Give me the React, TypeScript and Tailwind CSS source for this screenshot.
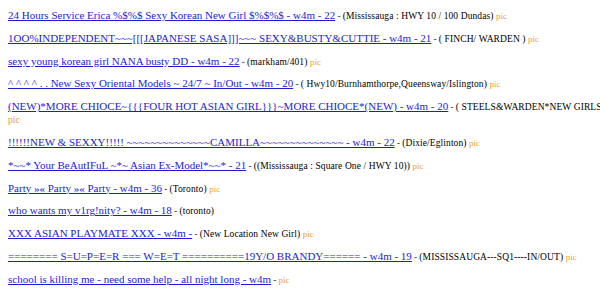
import React from 'react';

type Post = { title: string; loc?: string; pic?: boolean; picBelow?: boolean };

const posts: Post[] = [
  { title: '24 Hours Service Erica %$%$ Sexy Korean New Girl $%$%$ - w4m - 22', loc: '(Mississauga : HWY 10 / 100 Dundas)', pic: true },
  { title: '1OO%INDEPENDENT~~~[[[JAPANESE SASA]]]~~~ SEXY&BUSTY&CUTTIE - w4m - 21', loc: '( FINCH/ WARDEN )', pic: true },
  { title: 'sexy young korean girl NANA busty DD - w4m - 22', loc: '(markham/401)', pic: true },
  { title: '^ ^ ^ ^ . . New Sexy Oriental Models ~ 24/7 ~ In/Out - w4m - 20', loc: '( Hwy10/Burnhamthorpe,Queensway/Islington)', pic: true },
  { title: '(NEW)*MORE CHIOCE~{{{FOUR HOT ASIAN GIRL}}}~MORE CHIOCE*(NEW) - w4m - 20', loc: '( STEELS&WARDEN*NEW GIRLS)', pic: true, picBelow: true },
  { title: '!!!!!!NEW & SEXXY!!!!! ~~~~~~~~~~~~~~CAMILLA~~~~~~~~~~~~~~ - w4m - 22', loc: '(Dixie/Eglinton)', pic: true },
  { title: '*~~* Your BeAutIFuL ~*~ Asian Ex-Model*~~* - 21', loc: '((Mississauga : Square One / HWY 10))', pic: true },
  { title: 'Party »« Party »« Party - w4m - 36', loc: '(Toronto)', pic: true },
  { title: 'who wants my v1rg!nity? - w4m - 18', loc: '(toronto)' },
  { title: 'XXX ASIAN PLAYMATE XXX - w4m -', loc: '(New Location New Girl)', pic: true },
  { title: '======== S=U=P=E=R === W=E=T ==========19Y/O BRANDY====== - w4m - 19', loc: '(MISSISSAUGA---SQ1----IN/OUT)', pic: true },
  { title: 'school is killing me - need some help - all night long - w4m', pic: true },
];

export default function App() {
  return (
    <div className="w-[600px] h-[294px] overflow-hidden bg-white font-['Liberation_Serif',serif]">
      <div className="pl-2 pt-[9px] flex flex-col gap-[10.3px]">
        {posts.map((p, i) => (
          <div key={i} className="flex flex-col">
            <div className="text-[11px] leading-[12px] text-black whitespace-nowrap">
              <a href="#" className="text-[#1c1cd6] underline">{p.title}</a>
              <span className="text-[9px] leading-none"> - </span>
              {p.loc && <span className="text-[9.5px] leading-none tracking-[0.1px]">{p.loc} </span>}
              {p.pic && !p.picBelow && <span className="text-[9px] leading-none text-[#f0a030]">pic</span>}
            </div>
            {p.picBelow && (
              <span className="self-start mt-[1px] text-[9.5px] leading-[12px] text-[#ec9a2a]">pic</span>
            )}
          </div>
        ))}
      </div>
    </div>
  );
}
